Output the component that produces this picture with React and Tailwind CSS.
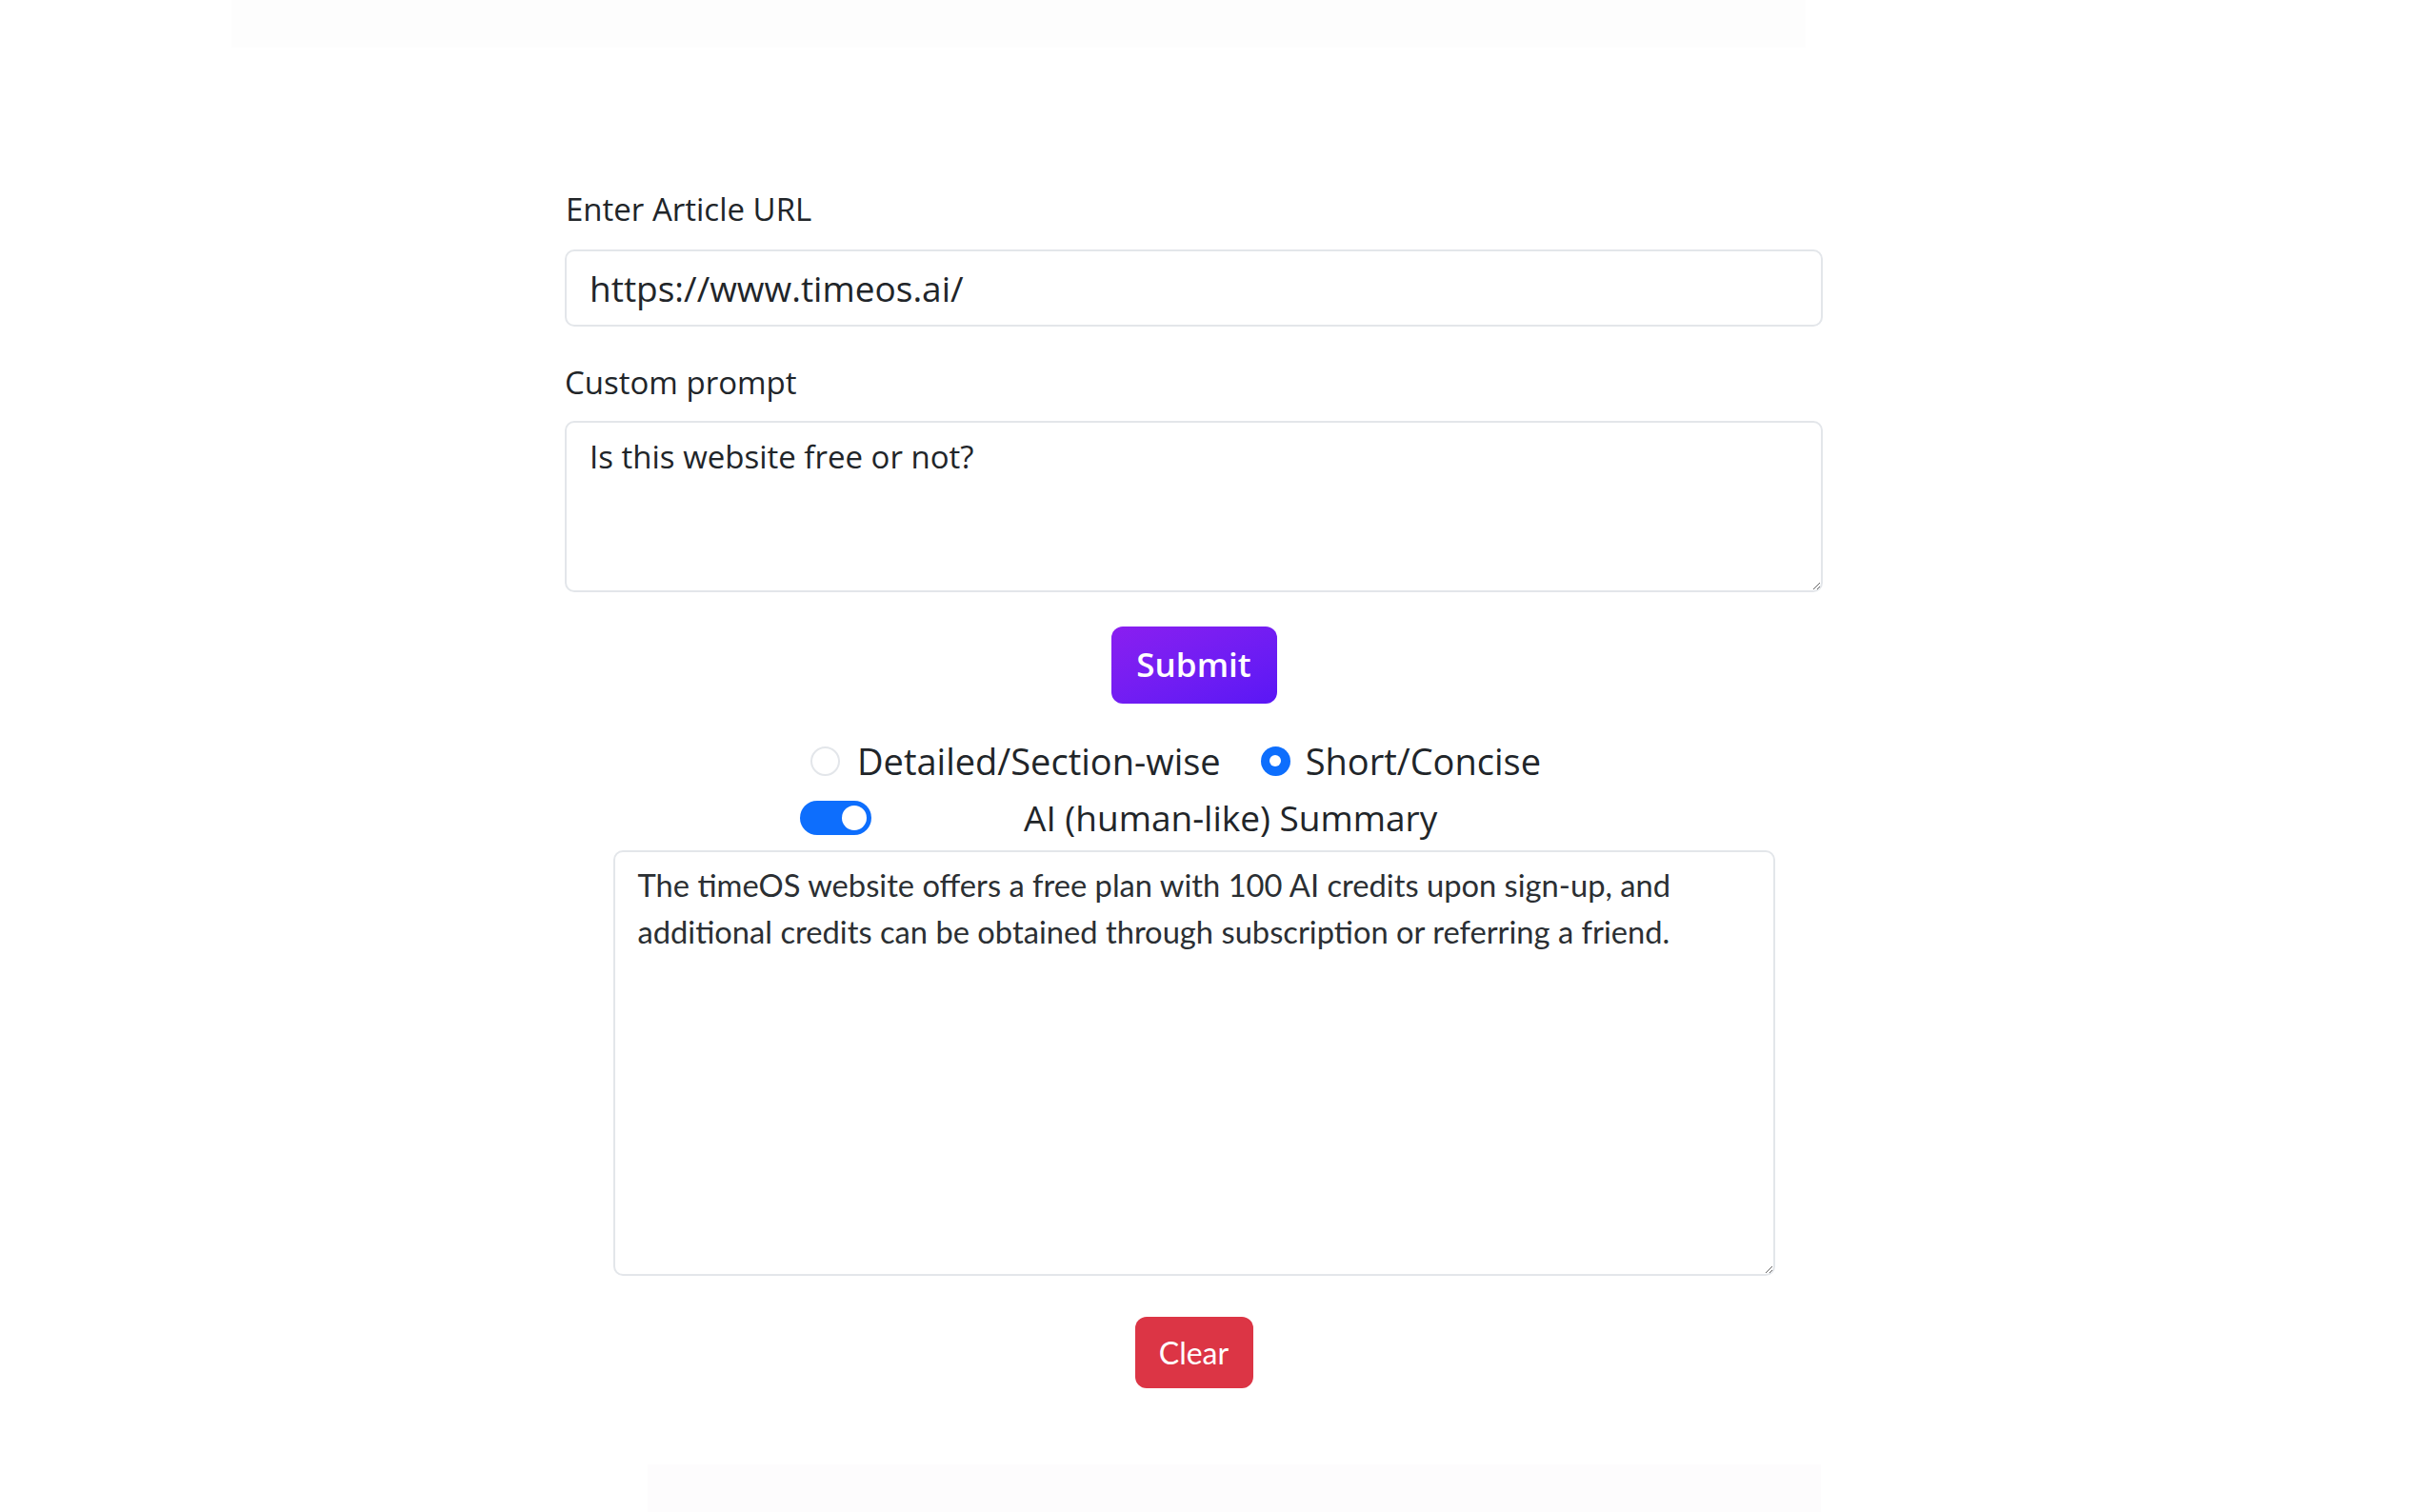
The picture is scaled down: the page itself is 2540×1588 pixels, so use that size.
import React from "react";

function Radio({ checked }) {
  return checked ? (
    <span className="flex h-[31px] w-[31px] shrink-0 items-center justify-center rounded-full bg-[#0d6efd]">
      <span className="h-[12px] w-[12px] rounded-full bg-white" />
    </span>
  ) : (
    <span className="h-[31px] w-[31px] shrink-0 rounded-full border-2 border-[#e3e6ea] bg-white" />
  );
}

export default function App() {
  return (
    <div className="h-screen overflow-hidden bg-white font-['Open_Sans',sans-serif] text-[#212529]">
      <div className="flex h-[50px]">
        <div className="ml-[243px] w-[1653px] bg-[#fdfdfd]" />
      </div>
      <div className="ml-[593px] w-[1321px] pt-[147px]">
        <label className="block pl-[1px] text-[33px] leading-[46px]">Enter Article URL</label>
        <input
          readOnly
          value="https://www.timeos.ai/"
          className="mt-[19px] block h-[81px] w-full rounded-[10px] border-2 border-[#e3e6ea] bg-white px-[24px] text-[37px] text-[#212529] outline-none"
        />
        <label className="mt-[36px] block text-[33px] leading-[46px]">Custom prompt</label>
        <textarea
          readOnly
          value="Is this website free or not?"
          className="mt-[17px] block h-[180px] w-full rounded-[10px] border-2 border-[#e3e6ea] bg-white px-[24px] py-[13px] text-[33px] leading-[46px] text-[#212529] outline-none"
        />
        <div className="mt-[36px] flex justify-center">
          <button className="h-[81px] w-[174px] rounded-[12px] bg-gradient-to-br from-[#8a1ef0] to-[#5a16f5] text-[35px] font-semibold text-white">
            Submit
          </button>
        </div>
        <div className="mt-[37px] flex h-[46px] items-center pl-[258px] text-[38px]">
          <Radio checked={false} />
          <span className="ml-[18px]">Detailed/Section-wise</span>
          <span className="ml-[42px]">
            <Radio checked />
          </span>
          <span className="ml-[16px]">Short/Concise</span>
        </div>
        <div className="mt-[14px] flex h-[46px] items-center pl-[247px] text-[37px]">
          <span className="flex h-[36px] w-[75px] shrink-0 items-center justify-end rounded-full bg-[#0d6efd] px-[5px]">
            <span className="h-[26px] w-[26px] rounded-full bg-white" />
          </span>
          <span className="ml-[160px]">AI (human-like) Summary</span>
        </div>
        <textarea
          readOnly
          value="The timeOS website offers a free plan with 100 AI credits upon sign-up, and additional credits can be obtained through subscription or referring a friend."
          className="mx-auto mt-[11px] block h-[447px] w-[1220px] rounded-[10px] border-2 border-[#e3e6ea] bg-white px-[24px] py-[11px] font-['Lato',sans-serif] text-[32.7px] leading-[48.6px] text-[#2b2f33] outline-none"
        />
        <div className="mt-[43px] flex justify-center">
          <button className="h-[75px] w-[124px] rounded-[12px] bg-[#dc3545] font-['Lato',sans-serif] text-[32px] text-white">
            Clear
          </button>
        </div>
      </div>
      <div className="mt-[80px] flex h-[50px]">
        <div className="ml-[680px] w-[1232px] bg-[#fdfcfd]" />
      </div>
    </div>
  );
}
